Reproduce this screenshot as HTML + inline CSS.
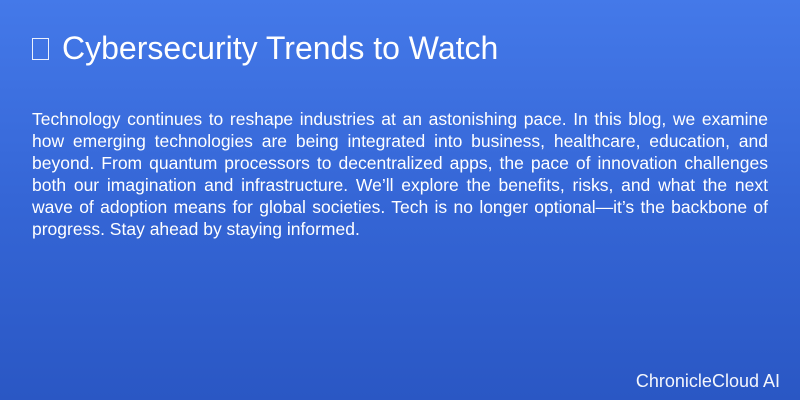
<!DOCTYPE html>
<html><head><meta charset="utf-8"><style>
html,body{margin:0;padding:0}
body{width:800px;height:400px;overflow:hidden;background:linear-gradient(180deg,#4479e9 0%,#3566d6 50%,#2a57c4 100%);font-family:"Liberation Sans",sans-serif;color:#fff;position:relative}
h1{position:absolute;left:32px;top:26px;margin:0;font-weight:normal;font-size:32px;line-height:44px;white-space:nowrap}
.box{display:inline-block;width:17px;height:22px;border:1px solid #fff;box-sizing:border-box;vertical-align:-1px;margin-right:13px;opacity:.9}
p{position:absolute;left:32px;top:108px;width:736px;margin:0;font-size:17.5px;line-height:22px;text-align:justify}
.f{position:absolute;right:20px;top:370px;font-size:18px;line-height:22px;opacity:.95}
</style></head><body>
<h1><span class="box"></span>Cybersecurity Trends to Watch</h1>
<p>Technology continues to reshape industries at an astonishing pace. In this blog, we examine how emerging technologies are being integrated into business, healthcare, education, and beyond. From quantum processors to decentralized apps, the pace of innovation challenges both our imagination and infrastructure. We’ll explore the benefits, risks, and what the next wave of adoption means for global societies. Tech is no longer optional—it’s the backbone of progress. Stay ahead by staying informed.</p>
<div class="f">ChronicleCloud AI</div>
</body></html>
